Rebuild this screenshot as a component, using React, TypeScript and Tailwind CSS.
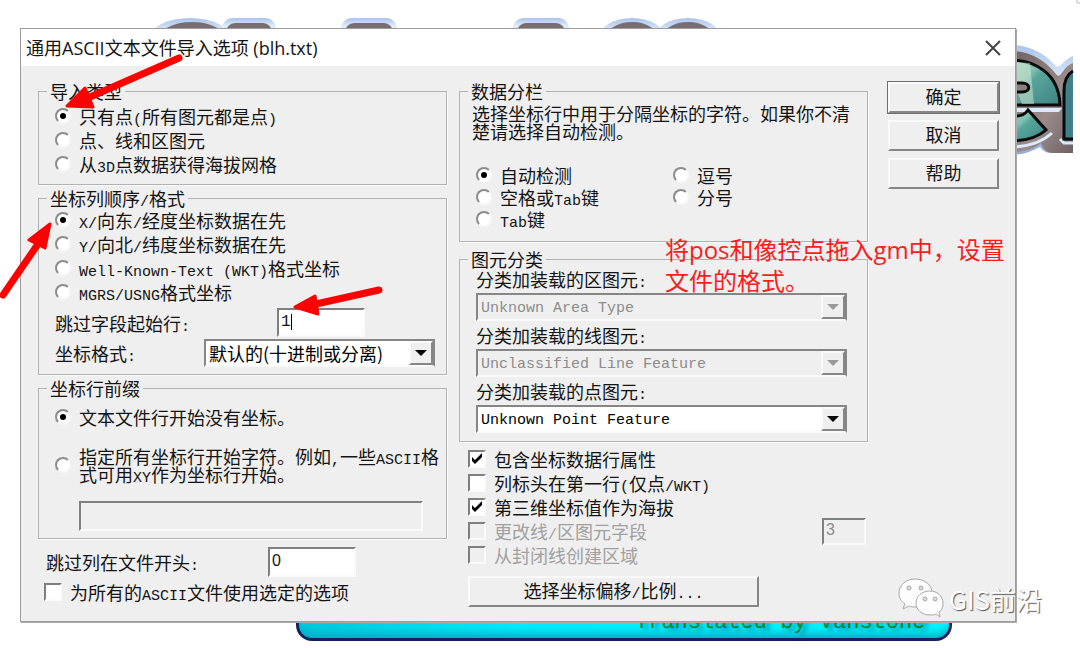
import { useState, type ReactNode } from "react";
import { clsx } from "clsx";

const sunken =
  "border-2 border-t-[#7f7f7f] border-l-[#7f7f7f] border-r-[#fafafa] border-b-[#fafafa]";
const raised =
  "border-2 border-t-[#fafafa] border-l-[#fafafa] border-r-[#868686] border-b-[#868686]";

/* CJK text at 18px, Latin runs at half that pitch */
function Mixed({ text }: { text: string }) {
  return (
    <>
      {text.split(/([\x20-\x7e]+)/).map((part, i) =>
        i % 2 ? (
          <span key={i} className="font-['Liberation_Mono',monospace] text-[15px] leading-[0px] whitespace-pre">
            {part}
          </span>
        ) : (
          part
        )
      )}
    </>
  );
}

function Group({ title, className, children }: { title: string; className?: string; children: ReactNode }) {
  return (
    <fieldset className="min-w-0 border border-[#b2b2b2] shadow-[1px_1px_0_#fafafa]">
      <legend className="ml-2 px-[3px] h-[18px]">
        <Mixed text={title} />
      </legend>
      <div className={className}>{children}</div>
    </fieldset>
  );
}

interface RadioProps {
  name: string;
  label: string;
  checked: boolean;
  onSelect: () => void;
  className?: string;
}

function Radio({ name, label, checked, onSelect, className }: RadioProps) {
  return (
    <label className={clsx("flex items-center gap-2", className)}>
      <span className="relative flex shrink-0">
        <input
          type="radio"
          name={name}
          checked={checked}
          onChange={onSelect}
          className="peer appearance-none size-4 rounded-full bg-white border-2 border-t-[#8c8c8c] border-l-[#8c8c8c] border-r-[#f8f8f8] border-b-[#f8f8f8]"
        />
        <span className="hidden peer-checked:block absolute inset-[5px] rounded-full bg-black" />
      </span>
      <span>
        <Mixed text={label} />
      </span>
    </label>
  );
}

function CheckBox({ label, defaultChecked, disabled }: { label: string; defaultChecked?: boolean; disabled?: boolean }) {
  return (
    <label className={clsx("flex items-center gap-2 h-[18px]", disabled && "text-[#a0a0a0]")}>
      <span className="relative flex shrink-0">
        <input
          type="checkbox"
          defaultChecked={defaultChecked}
          disabled={disabled}
          className={clsx("peer appearance-none size-[18px]", sunken, disabled ? "bg-[#efefef]" : "bg-white")}
        />
        <svg viewBox="0 0 18 18" className="hidden peer-checked:block absolute inset-0 size-full pointer-events-none">
          <path d="M4 7v4l3 3 7-7V3L7 10z" fill="#000" />
        </svg>
      </span>
      <span>
        <Mixed text={label} />
      </span>
    </label>
  );
}

interface ComboProps {
  id: string;
  value: string;
  disabled?: boolean;
  latin?: boolean;
}

function Combo({ id, value, disabled, latin }: ComboProps) {
  return (
    <div
      className={clsx(
        "relative h-7 border-2 border-[#868686] border-b-[#fafafa]",
        disabled ? "bg-[#efefef]" : "bg-white"
      )}
    >
      <select
        id={id}
        disabled={disabled}
        className={clsx(
          "block appearance-none w-full h-6 pl-[3px] pr-7 opacity-100",
          latin ? "font-['Liberation_Mono',monospace] text-[15px] leading-6 pt-0.5" : "leading-6",
          disabled ? "text-[#8c8c8c]" : "text-black"
        )}
      >
        <option>{value}</option>
      </select>
      <span
        className={clsx(
          "absolute right-0 inset-y-0 w-6 bg-[#efefef] flex items-center justify-center pointer-events-none",
          raised
        )}
      >
        <svg viewBox="0 0 12 6" className={clsx("w-3 h-1.5", disabled ? "fill-[#999]" : "fill-black")}>
          <path d="M0 0h12L6 6z" />
        </svg>
      </span>
    </div>
  );
}

function PushButton({ children, primary, className }: { children: ReactNode; primary?: boolean; className?: string }) {
  return (
    <button
      type="button"
      className={clsx(
        "h-[31px] pb-1 bg-[#efefef] flex items-center justify-center",
        raised,
        primary && "outline outline-[#6e6e6e] border-r-[#7a7a7a] border-b-[#7a7a7a]",
        className
      )}
    >
      {children}
    </button>
  );
}

/* Product splash visible around the dialog */
function Splash() {
  const caps = [
    [222, 54],
    [341, 56],
    [513, 56],
  ];
  return (
    <div aria-hidden="true" className="absolute inset-0 overflow-hidden">
      <svg width="1080" height="648" viewBox="0 0 1080 648" className="absolute top-0 left-0">
        <defs>
          <linearGradient id="chrome" x1="0" y1="0" x2="0" y2="1">
            <stop offset="0" stopColor="#a9c3ea" />
            <stop offset=".35" stopColor="#e3eefb" />
            <stop offset="1" stopColor="#8fa9d6" />
          </linearGradient>
          <linearGradient id="steel" x1="0" y1="0" x2="1" y2="1">
            <stop offset="0" stopColor="#6d6163" />
            <stop offset=".6" stopColor="#9b8b8b" />
            <stop offset="1" stopColor="#6f6264" />
          </linearGradient>
          <linearGradient id="glass" x1="0" y1="0" x2="1" y2="1">
            <stop offset="0" stopColor="#8fd0bd" />
            <stop offset=".35" stopColor="#7fc0b0" />
            <stop offset=".45" stopColor="#58a59b" />
            <stop offset="1" stopColor="#3f8284" />
          </linearGradient>
        </defs>
        <ellipse cx="190" cy="38" rx="40" ry="20" fill="url(#chrome)" />
        <ellipse cx="192" cy="40" rx="34" ry="18" fill="#786d70" />
        {caps.map(([x, w]) => (
          <g key={x}>
            <rect x={x} y="18" width={w} height="24" rx="11" fill="url(#chrome)" />
            <rect x={x + 4} y="23" width={w - 8} height="20" rx="9" fill="#786d70" />
          </g>
        ))}
        {[632, 688].map((cx) => (
          <g key={cx}>
            <ellipse cx={cx} cy="38" rx="33" ry="20" fill="url(#chrome)" />
            <ellipse cx={cx} cy="40" rx="27" ry="18" fill="#786d70" />
          </g>
        ))}
        <path
          d="M1010 45c18 0 33 7 44 19 4 5 6 2 9-1 4-4 7-6 10-7v97h-22c-5 0-9-3-11-6-9 5-18 8-30 8z"
          fill="url(#chrome)"
        />
        <path
          d="M1010 51c19 0 34 8 46 23 3 4 5 0 8-4 3-4 6-6 9-7v90h-20c-6 0-10-4-12-10-9 7-18 9-31 9z"
          fill="url(#steel)"
        />
        <path d="M1010 60c26 0 49 14 50 45H1010z" fill="url(#glass)" stroke="#070b0b" strokeWidth="3" />
        <path d="M1030 63l4 41h-12l-8-20v-22z" fill="#dcead0" opacity=".5" />
        <path d="M1010 83h12c9 0 9 9 0 9h-12" fill="#8c7f80" stroke="#070b0b" strokeWidth="3" />
        <path d="M1010 108h52l-3 4h-49z" fill="#dce9f9" />
        <path d="M1010 116c7 1 14 0 18-6l18 20c-9 8-20 11-36 11z" fill="url(#glass)" stroke="#070b0b" strokeWidth="3" />
        <path d="M1010 147c17 0 31-4 42-14M1060 139l4 4h9" fill="none" stroke="#dce9f9" strokeWidth="3" />
        <path d="M1073 71c-7 4-9 12-9 20v48h9z" fill="#417f8b" />
        <path d="M1073 71c-7 4-9 12-9 20v48h9" fill="none" stroke="#070b0b" strokeWidth="3" />
        <path d="M1077 0v3h3" fill="none" stroke="#bbb" />
      </svg>
      <div className="absolute left-[296px] top-[590px] w-[656px] h-[51px] rounded-2xl border-3 border-[#15205c] bg-linear-to-r from-[#00c8dc] via-[#00ecff] via-35% to-[#00f6ff] shadow-[inset_0_-10px_8px_-6px_#00a9bd]">
        <p className="absolute left-[336px] top-[18px] leading-6 whitespace-pre font-['Liberation_Mono',monospace] text-[22px] text-[#0b7d28] [text-shadow:4px_3px_4px_#008fa0]">
          Translated by Vanstone
        </p>
      </div>
    </div>
  );
}

/* Red arrows and note drawn over the dialog, plus the channel mark */
function Annotations() {
  return (
    <div className="absolute inset-0 pointer-events-none overflow-hidden">
      <svg width="1080" height="648" viewBox="0 0 1080 648" className="absolute top-0 left-0" aria-hidden="true">
        <g fill="#f00" stroke="#f00" strokeLinejoin="round" strokeLinecap="round">
          <path d="M179 58L90 97M3 295l35-51M379 290l-63 14" fill="none" strokeWidth="7" />
          <path d="M67 106l18-18 8 19zM50 224l-21 16 16 8zM295 307l20-11 3 18z" strokeWidth="3" />
        </g>
        <g fill="#fdfdfd" stroke="#a8a8a8" strokeWidth="1">
          <path d="M915 579c-9 0-16 6-16 14 0 5 2 8 6 11l-2 5 6-3c2 1 4 1 7 1 10 0 16-6 16-14s-7-14-17-14z" />
          <path d="M930 591c-8 0-14 5-14 12s6 12 14 12c2 0 4 0 6-1l4 3-1-5c3-2 4-5 4-9 0-7-6-12-13-12z" />
          <circle cx="909" cy="588" r="2" fill="#ddd" />
          <circle cx="921" cy="588" r="2" fill="#ddd" />
          <circle cx="925" cy="599" r="2" fill="#ddd" />
          <circle cx="935" cy="599" r="2" fill="#ddd" />
        </g>
      </svg>
      <p className="absolute left-[665px] top-[234px] leading-[31px] text-[24px] text-[#fb1c1c] whitespace-nowrap font-['Open_Sans','Noto_Sans_CJK_SC',sans-serif]">
        将pos和像控点拖入gm中，设置
        <br />
        文件的格式。
      </p>
      <p className="absolute left-[949px] top-[581px] leading-9 text-[26px] text-white whitespace-nowrap font-['Noto_Sans_CJK_SC',sans-serif] [text-shadow:1px_1px_1px_#555]">
        GIS前沿
      </p>
    </div>
  );
}

const IMPORT_TYPES = ["只有点(所有图元都是点)", "点、线和区图元", "从3D点数据获得海拔网格"];
const ORDERS = [
  "X/向东/经度坐标数据在先",
  "Y/向北/纬度坐标数据在先",
  "Well-Known-Text (WKT)格式坐标",
  "MGRS/USNG格式坐标",
];
const DELIMITERS = ["自动检测", "逗号", "空格或Tab键", "分号", "Tab键"];
const FEATURES = [
  { id: "area", label: "分类加装载的区图元:", value: "Unknown Area Type", disabled: true },
  { id: "line", label: "分类加装载的线图元:", value: "Unclassified Line Feature", disabled: true },
  { id: "point", label: "分类加装载的点图元:", value: "Unknown Point Feature", disabled: false },
];

export default function App() {
  const [importType, setImportType] = useState(0);
  const [order, setOrder] = useState(0);
  const [prefix, setPrefix] = useState(0);
  const [delimiter, setDelimiter] = useState(0);

  const inputBase = clsx("text-base leading-4 px-[2px] pb-0.5 rounded-none outline-none", sunken);

  return (
    <div className="relative min-h-screen bg-white pt-7 pl-5 pr-16 text-[18px] leading-[18px] text-[#141414] font-['Noto_Sans_CJK_SC',sans-serif]">
      <Splash />

      <main className="relative border border-[#9c9c9c] bg-[#efefef] shadow-[1px_1px_0_#aaa]">
        <header className="h-[37px] bg-white flex items-center justify-between pl-[5px] pr-[14px]">
          <h1 className="text-[18px] font-['Open_Sans','Noto_Sans_CJK_SC',sans-serif] whitespace-nowrap">
            通用ASCII文本文件导入选项 (blh.txt)
          </h1>
          <button type="button" aria-label="关闭" className="size-4">
            <svg viewBox="0 0 16 16" className="size-4" fill="none" stroke="#444" strokeWidth="2">
              <path d="M1 1l14 14M15 1L1 15" />
            </svg>
          </button>
        </header>

        <form className="flex items-start pt-4 pl-[17px] pr-4 pb-3.5 whitespace-nowrap" onSubmit={(e) => e.preventDefault()}>
          {/* Left column */}
          <div className="flex-1 min-w-0 flex flex-col gap-1">
            <Group title="导入类型" className="pl-4 pt-1 pb-2">
              {IMPORT_TYPES.map((t, i) => (
                <Radio key={t} name="type" label={t} checked={importType === i} onSelect={() => setImportType(i)} className="h-6" />
              ))}
            </Group>

            <Group title="坐标列顺序/格式" className="pl-4 pr-[11px] pt-px pb-[7px]">
              {ORDERS.map((t, i) => (
                <Radio key={t} name="order" label={t} checked={order === i} onSelect={() => setOrder(i)} className="h-6" />
              ))}
              <div className="mt-1 flex items-center">
                <label htmlFor="skipRows" className="w-[222px]">
                  <Mixed text="跳过字段起始行:" />
                </label>
                <span className="relative flex">
                  <input
                    id="skipRows"
                    defaultValue="1"
                    className={clsx(inputBase, "font-['Liberation_Mono',monospace] bg-white w-[88px] h-[29px]")}
                  />
                  {/* text caret */}
                  <span className="absolute left-3.5 top-1.5 w-px h-4 bg-black" />
                </span>
              </div>
              <div className="mt-0.5 flex items-center">
                <label htmlFor="format" className="w-[149px]">
                  <Mixed text="坐标格式:" />
                </label>
                <div className="flex-1">
                  <Combo id="format" value="默认的(十进制或分离)" />
                </div>
              </div>
            </Group>

            <Group title="坐标行前缀" className="pl-4 pt-2 pb-[7px]">
              <Radio name="prefix" label="文本文件行开始没有坐标。" checked={prefix === 0} onSelect={() => setPrefix(0)} className="h-6" />
              <Radio
                name="prefix"
                label="指定所有坐标行开始字符。例如,一些ASCII格式可用XY作为坐标行开始。"
                checked={prefix === 1}
                onSelect={() => setPrefix(1)}
                className="mt-[18px] whitespace-normal"
              />
              <div className="mt-[18px] pl-6 pr-[23px]">
                <input
                  aria-label="坐标行前缀"
                  disabled
                  className={clsx(inputBase, "block w-full h-[30px] bg-[#efefef]")}
                />
              </div>
            </Group>

            <div className="pl-2 pt-1 flex items-center">
              <label htmlFor="skipCols" className="w-[222px]">
                <Mixed text="跳过列在文件开头:" />
              </label>
              <input
                id="skipCols"
                defaultValue="0"
                className={clsx(inputBase, "font-['Liberation_Sans',sans-serif] bg-white w-[88px] h-[30px]")}
              />
            </div>
            <div className="pl-1.5 pt-0.5">
              <CheckBox label="为所有的ASCII文件使用选定的选项" />
            </div>
          </div>

          {/* Middle column */}
          <div className="ml-3 flex-1 min-w-0">
            <Group title="数据分栏" className="pl-3 pr-4 pt-1 pb-[11px]">
              <p className="whitespace-normal">选择坐标行中用于分隔坐标的字符。如果你不清楚请选择自动检测。</p>
              <div className="mt-6 pl-1 grid grid-cols-[197px_1fr]">
                {DELIMITERS.map((t, i) => (
                  <Radio key={t} name="delimiter" label={t} checked={delimiter === i} onSelect={() => setDelimiter(i)} className="h-[22px]" />
                ))}
              </div>
            </Group>

            <div className="mt-2">
              <Group title="图元分类" className="pl-4 pr-5 pt-0.5 pb-2">
                <div className="flex flex-col gap-[5px]">
                  {FEATURES.map((f) => (
                    <div key={f.id} className="flex flex-col gap-[5px]">
                      <label htmlFor={f.id} className="h-[18px]">
                        <Mixed text={f.label} />
                      </label>
                      <Combo id={f.id} value={f.value} disabled={f.disabled} latin />
                    </div>
                  ))}
                </div>
              </Group>
            </div>

            <div className="mt-2 pl-[9px] pr-0.5 flex flex-col gap-1.5">
              <CheckBox label="包含坐标数据行属性" defaultChecked />
              <CheckBox label="列标头在第一行(仅点/WKT)" />
              <CheckBox label="第三维坐标值作为海拔" defaultChecked />
              <div className="flex items-center justify-between h-[18px]">
                <CheckBox label="更改线/区图元字段" disabled />
                <input
                  aria-label="字段"
                  disabled
                  defaultValue="3"
                  className={clsx(inputBase, "font-['Liberation_Sans',sans-serif] w-11 h-[27px] bg-[#efefef] text-[#8c8c8c]")}
                />
              </div>
              <CheckBox label="从封闭线创建区域" disabled />
            </div>
            <PushButton className="mt-3 ml-[9px] w-[291px]">
              <span>
                <Mixed text="选择坐标偏移/比例..." />
              </span>
            </PushButton>
          </div>

          {/* Actions */}
          <div className="ml-5 w-[111px] shrink-0 flex flex-col gap-[7px]">
            <PushButton primary>确定</PushButton>
            <PushButton>取消</PushButton>
            <PushButton>帮助</PushButton>
          </div>
        </form>
      </main>

      <Annotations />
    </div>
  );
}
